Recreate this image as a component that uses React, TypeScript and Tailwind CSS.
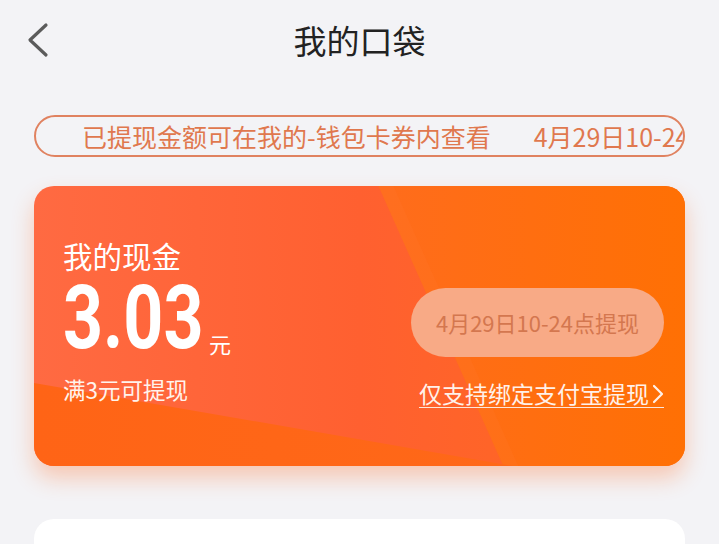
import React from 'react';

const cjk = "font-['Noto_Sans_CJK_SC',sans-serif]";

const BackIcon = () => (
  <svg width="24" height="36" viewBox="0 0 24 36" fill="none">
    <polyline points="19,3 3,18 19,33" stroke="#5b5b5b" strokeWidth="3.2" strokeLinecap="round" strokeLinejoin="round" />
  </svg>
);

const CardBackground = () => (
  <svg className="absolute inset-0 h-full w-full" viewBox="0 0 652 280" preserveAspectRatio="none">
    <defs>
      <linearGradient id="base" x1="0" y1="0" x2="1" y2="0">
        <stop offset="0" stopColor="#ff6a42" />
        <stop offset="0.5" stopColor="#ff6030" />
        <stop offset="1" stopColor="#ff6a1c" />
      </linearGradient>
      <linearGradient id="right" x1="0" y1="0" x2="1" y2="0">
        <stop offset="0" stopColor="#ff6c1c" />
        <stop offset="1" stopColor="#ff7004" />
      </linearGradient>
      <linearGradient id="low" x1="0" y1="0" x2="1" y2="0">
        <stop offset="0" stopColor="#ff6416" />
        <stop offset="1" stopColor="#ff6818" />
      </linearGradient>
    </defs>
    <rect width="652" height="280" fill="url(#base)" />
    <polygon points="345,0 652,0 652,280 470,280" fill="url(#right)" />
    <polygon points="345,0 360,0 485,280 470,280" fill="#ff7a30" opacity="0.18" />
    <polygon points="0,197 480,280 0,280" fill="url(#low)" />
  </svg>
);

const Chevron = () => (
  <svg width="12" height="20" viewBox="0 0 12 20" fill="none">
    <polyline points="2,2 10,10 2,18" stroke="#fff1ea" strokeWidth="2.2" strokeLinecap="round" strokeLinejoin="round" />
  </svg>
);

export default function App() {
  return (
    <div className={`min-h-screen bg-[#f3f3f6] ${cjk}`}>
      <header className="relative flex h-[80px] items-center justify-center">
        <button className="absolute left-[27px] top-[22px]">
          <BackIcon />
        </button>
        <h1 className="text-[33px] leading-none text-[#222]">我的口袋</h1>
      </header>

      <div className="px-[34px]">
        <div className="mt-[35px] flex h-[42px] items-center overflow-hidden whitespace-nowrap rounded-full border-2 border-[#e08260] pl-[46px]">
          <span className="text-[25px] leading-none text-[#e0784e]">已提现金额可在我的-钱包卡券内查看</span>
          <span className="ml-[43px] text-[25px] leading-none text-[#e0784e]">4月29日10-24点提现</span>
        </div>

        <div className="relative mt-[29px] h-[280px] overflow-hidden rounded-[20px] shadow-[0_12px_22px_rgba(255,110,40,0.32)]">
          <CardBackground />
          <div className="relative flex h-full justify-between pl-[29px] pr-[21px]">
            <div className="flex flex-col pt-[55px] text-white">
              <div className="text-[29.5px] leading-none">我的现金</div>
              <div className="mt-[2px] flex items-end">
                <span className="mr-[-38px] origin-left scale-x-[0.785] font-['Roboto',sans-serif] text-[89px] font-bold leading-none">3.03</span>
                <span className="mb-[8px] ml-[5px] text-[22px] leading-none">元</span>
              </div>
              <div className="mt-[16px] text-[22.5px] leading-none text-[#fff3ec]">满3元可提现</div>
            </div>

            <div className="flex flex-col items-end pt-[102px]">
              <button className="flex h-[69px] w-[253px] items-center justify-center rounded-full bg-[#f8aa86] text-[22px] text-[#d4774f]">
                4月29日10-24点提现
              </button>
              <a className="mt-[25px] flex items-center gap-[3px] border-b-[1.5px] border-[#fde6da] pb-[2px] text-[23px] leading-none text-[#fff1ea]">
                仅支持绑定支付宝提现
                <Chevron />
              </a>
            </div>
          </div>
        </div>

        <div className="mt-[53px] h-[120px] rounded-[20px] bg-white" />
      </div>
    </div>
  );
}
